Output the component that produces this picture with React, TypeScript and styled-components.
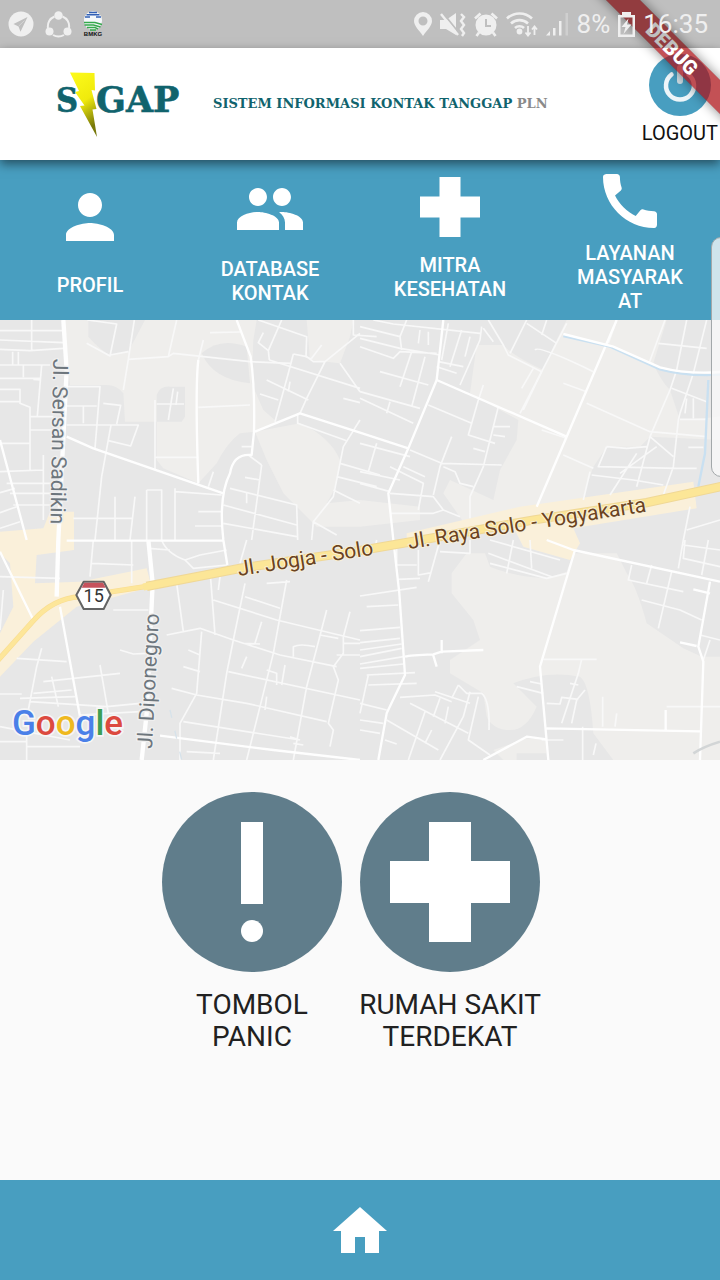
import React from "react";
import styled, { createGlobalStyle } from "styled-components";

const BLUE = "#489ec0";
const SLATE = "#607d8b";
const TEAL = "#10636d";

const GlobalStyle = createGlobalStyle`
  *, *::before, *::after { box-sizing: border-box; }
  body { margin: 0; background: #fff; font-family: Roboto, sans-serif; }
  button { font: inherit; color: inherit; background: none; border: 0; padding: 0; cursor: pointer; }
  svg { display: block; flex: none; }
`;

const Page = styled.div`
  position: relative;
  display: flex;
  flex-direction: column;
  min-height: 100vh;
  overflow: hidden;
`;

/* ---------- status bar ---------- */

const StatusBar = styled.div`
  position: relative;
  z-index: 4;
  display: flex;
  align-items: center;
  justify-content: space-between;
  height: 48px;
  padding: 0 12px 0 8px;
  background: rgba(0, 0, 0, 0.25);
  color: #efefef;
`;

const StatusGroup = styled.div<{ $gap: number }>`
  display: flex;
  align-items: center;
  gap: ${(p) => p.$gap}px;
`;

const StatusText = styled.span`
  font-size: 26px;
  line-height: 48px;
`;

/* ---------- debug ribbon ---------- */

const RibbonCorner = styled.div`
  position: absolute;
  top: 0;
  right: 0;
  z-index: 3;
  width: 140px;
  height: 140px;
  overflow: hidden;
  pointer-events: none;
`;

const Ribbon = styled.div`
  position: absolute;
  top: 37px;
  left: -18px;
  width: 220px;
  height: 24px;
  transform: rotate(45deg);
  background: rgba(172, 14, 20, 0.72);
  box-shadow: 0 0 12px rgba(0, 0, 0, 0.45);
  color: #fff;
  font-size: 20px;
  font-weight: 900;
  line-height: 24px;
  text-align: center;
`;

/* ---------- header ---------- */

const Header = styled.header`
  position: relative;
  z-index: 2;
  display: flex;
  align-items: center;
  gap: 32px;
  height: 112px;
  padding: 0 2px 0 56px;
  background: #fff;
  box-shadow: 0 4px 10px rgba(0, 0, 0, 0.5);
`;

const Title = styled.h1`
  margin: 0;
  color: ${TEAL};
  font-family: "DejaVu Serif", serif;
  font-size: 13px;
  font-weight: 700;
  line-height: 16px;
  white-space: nowrap;
`;

const TitleSuffix = styled.span`
  color: #8a8a8a;
`;

const LogoutButton = styled.button`
  display: flex;
  flex-direction: column;
  align-items: center;
  align-self: flex-start;
  gap: 5px;
  margin-left: auto;
  padding-top: 6px;
  color: #111;
  font-size: 20px;
  line-height: 24px;
`;

/* ---------- menu ---------- */

const Menu = styled.nav`
  display: grid;
  grid-template-columns: repeat(4, 1fr);
  height: 160px;
  background: ${BLUE};
  color: #fff;
`;

const MenuItem = styled.button`
  display: flex;
  flex-direction: column;
  align-items: center;
  justify-content: space-evenly;
`;

const MenuLabel = styled.span`
  width: 116px;
  padding-bottom: 2px;
  font-size: 20px;
  font-weight: 500;
  line-height: 24px;
  overflow-wrap: anywhere;
`;

/* ---------- map ---------- */

const MapArea = styled.section`
  height: 440px;
  background: #e8e8e8;
`;

const MapSvg = styled.svg`
  width: 100%;
  height: 100%;
`;

const EdgeHandle = styled.div`
  position: absolute;
  top: 237px;
  right: -12px;
  z-index: 3;
  width: 21px;
  height: 240px;
  border: 1px solid #a3a8aa;
  border-radius: 10px;
  background: rgba(250, 250, 250, 0.76);
`;

/* ---------- actions ---------- */

const Actions = styled.main`
  display: flex;
  flex: 1;
  justify-content: center;
  gap: 18px;
  padding: 32px 18px 32px 0;
  background: #fafafa;
`;

const ActionButton = styled.button`
  display: flex;
  flex-direction: column;
  align-items: center;
  align-self: flex-start;
  gap: 17px;
  width: 180px;
  color: #212121;
  font-size: 28px;
  line-height: 32px;
  white-space: nowrap;
`;

const BottomBar = styled.footer`
  display: flex;
  align-items: center;
  justify-content: center;
  height: 100px;
  background: ${BLUE};
  color: #fff;
`;

/* ---------- drawings ---------- */

const TelegramIcon = () => (
  <svg width="26" height="26" viewBox="0 0 26 26">
    <circle cx="13" cy="13" r="12.5" fill="currentColor" />
    <path d="M19.500 6 5.500 13l5 2.400 2 5.400z" fill="#bfbfbf" />
    <path d="M16.500 9.500 10.600 15.200" stroke="#d4d4d4" strokeWidth="1" />
  </svg>
);

const ShareIcon = () => (
  <svg width="27" height="27" viewBox="0 0 27 27" fill="none" stroke="currentColor" strokeWidth="2">
    <path d="M9.500 5.500A10.500 10.500 0 0 0 3 17M17.500 5.500A10.500 10.500 0 0 1 24 17M8 24a11 11 0 0 0 11 0" />
    <g fill="currentColor" stroke="none">
      <circle cx="13.500" cy="4.500" r="4.200" />
      <circle cx="4.500" cy="20.500" r="4" />
      <circle cx="22.500" cy="20.500" r="4" />
    </g>
  </svg>
);

const BmkgIcon = () => (
  <svg width="20" height="26" viewBox="0 0 20 26">
    <path d="M1 9a9 9 0 0 1 18 0v1a9 9 0 0 1-18 0z" fill="#f4f8fa" />
    <path d="M6 1.500h8M3.500 3.800h13M2 6h5M13 6h5" stroke="#3260b5" strokeWidth="1.400" />
    <path d="M1 11.500h11l7 2M1.500 14h9l7 2M4 16.500h8l3 1.500M7 19h6" stroke="#35a94c" strokeWidth="1.500" fill="none" />
    <text x="10" y="25" textAnchor="middle" fontSize="6" fontWeight="900" fontFamily="Liberation Sans, sans-serif" fill="#111">
      BMKG
    </text>
  </svg>
);

const PinIcon = () => (
  <svg width="18" height="24" viewBox="0 0 18 24">
    <path fill="currentColor" fillRule="evenodd" d="M9 0a9 9 0 0 0-9 9c0 5 5 9 9 15 4-6 9-10 9-15a9 9 0 0 0-9-9zm0 4.500a4.500 4.500 0 1 1 0 9 4.500 4.500 0 0 1 0-9z" />
  </svg>
);

const MuteIcon = () => (
  <svg width="26" height="25" viewBox="0 0 26 25">
    <path fill="currentColor" d="M0 8h6l10-7v22L6 17H0z" />
    <path d="M3 1l16 20" stroke="#bfbfbf" strokeWidth="2" />
    <path d="M1 2l17 21" stroke="currentColor" strokeWidth="2.400" />
    <path d="M21 2l3 3-3 4 3 4-3 4 3 4-2 3" fill="none" stroke="currentColor" strokeWidth="2.400" />
  </svg>
);

const AlarmIcon = () => (
  <svg width="24" height="25" viewBox="0 0 24 25">
    <circle cx="12" cy="13" r="10.500" fill="currentColor" />
    <path d="M1 6.500 6.500 1.500M23 6.500 17.500 1.500M5 20.500 2.500 24M19 20.500 21.500 24" stroke="currentColor" strokeWidth="2.600" />
    <path d="M12 7v7h5" fill="none" stroke="#bfbfbf" strokeWidth="2" />
  </svg>
);

const WifiIcon = () => (
  <svg width="32" height="26" viewBox="0 0 32 26" fill="none" stroke="currentColor" strokeWidth="2.600">
    <path d="M1 7.500a18 18 0 0 1 25 0M5 12.500a12.500 12.500 0 0 1 17 0M9 17a6.500 6.500 0 0 1 9 0" />
    <circle cx="13.500" cy="20.500" r="1.600" fill="currentColor" />
    <path d="M22 15v9M19.500 21.500 22 24.500l2.500-3M28.500 24v-8M26 18.500l2.500-3 2.500 3" strokeWidth="1.800" />
  </svg>
);

const SignalIcon = () => (
  <svg width="23" height="24" viewBox="0 0 23 24" fill="currentColor">
    <path d="M0 23.500 4 19v4.500zM7 16h2.500v7.500H7zM13 9h2.500v14.500H13z" />
    <path d="M19.500 1H22v22.500h-2.500z" opacity=".35" />
  </svg>
);

const BatteryIcon = () => (
  <svg width="17" height="25" viewBox="0 0 17 25">
    <path fill="currentColor" fillRule="evenodd" d="M4 0h9v3h4v22H0V3h4zM2.500 5.500v17h12v-17z" />
    <path fill="currentColor" d="M10.500 6.500 3.500 15h4l-2 7 8-9.500h-4.500z" />
  </svg>
);

const SigapLogo = () => (
  <svg width="125" height="72" viewBox="56 68 125 72" role="img" aria-label="SIGAP">
    <defs>
      <linearGradient id="bolt" x1="0" y1="0" x2="0.300" y2="1">
        <stop offset="0" stopColor="#fdfb1c" />
        <stop offset=".55" stopColor="#f0ea0c" />
        <stop offset="1" stopColor="#77780a" />
      </linearGradient>
    </defs>
    <g fill={TEAL} stroke={TEAL} strokeWidth="0.600" fontFamily="'DejaVu Serif', serif" fontWeight="700" fontSize="35">
      <text x="56" y="112" fontSize="34" fontFamily="'DejaVu Serif Condensed', 'DejaVu Serif', serif">
        S
      </text>
      <text x="96" y="112">GAP</text>
    </g>
    <path d="M70 72.500 94.500 73l.5 17.500-3.500-.5 5 19-4 .5L97 137 80 106l4.500-.5L75 92l4-1z" fill="url(#bolt)" />
  </svg>
);

const PowerIcon = () => (
  <svg width="62" height="62" viewBox="0 0 62 62">
    <circle cx="31" cy="31" r="31" fill={BLUE} />
    <path d="M22.500 20.500a14 14 0 1 0 17 0" fill="none" stroke="#edf5f9" strokeWidth="4.500" strokeLinecap="round" />
    <path d="M31 14v13" stroke="#cfdde4" strokeWidth="6" strokeLinecap="round" />
  </svg>
);

const Icon72 = ({ d }: { d: string }) => (
  <svg width="72" height="72" viewBox="0 0 24 24" fill="currentColor">
    <path d={d} />
  </svg>
);

const PERSON = "M12 12c2.210 0 4-1.790 4-4s-1.790-4-4-4-4 1.790-4 4 1.790 4 4 4zm0 2c-2.670 0-8 1.340-8 4v2h16v-2c0-2.660-5.330-4-8-4z";
const PEOPLE =
  "M16 11c1.660 0 2.990-1.340 2.990-3S17.660 5 16 5s-3 1.340-3 3 1.340 3 3 3zm-8 0c1.660 0 2.990-1.340 2.990-3S9.660 5 8 5 5 6.340 5 8s1.340 3 3 3zm0 2c-2.330 0-7 1.170-7 3.500V19h14v-2.500c0-2.330-4.670-3.500-7-3.500zm8 0c-.29 0-.62.020-.97.050 1.160.840 1.970 1.970 1.970 3.450V19h6v-2.500c0-2.330-4.670-3.500-7-3.500z";
const PHONE =
  "M20.010 15.380c-1.230 0-2.420-.2-3.530-.56-.35-.12-.74-.03-1.010.240l-1.570 1.970c-2.830-1.350-5.480-3.900-6.890-6.830l1.950-1.660c.27-.28.35-.67.240-1.020-.37-1.110-.56-2.300-.56-3.530 0-.54-.45-.99-.99-.99H4.190C3.650 3 3 3.240 3 3.990 3 13.280 10.730 21 20.010 21c.71 0 .99-.63.99-1.180v-3.450c0-.54-.45-.99-.99-.99z";

const CrossIcon = () => (
  <svg width="60" height="60" viewBox="0 0 60 60" fill="currentColor">
    <path d="M19.500 0h21v19.500H60v21H40.500V60h-21V40.500H0v-21h19.500z" />
  </svg>
);

const PanicIcon = () => (
  <svg width="180" height="180" viewBox="0 0 180 180">
    <circle cx="90" cy="90" r="90" fill={SLATE} />
    <path d="M79 30h22v82H79z" fill="#fff" />
    <circle cx="90" cy="139" r="11" fill="#fff" />
  </svg>
);

const HospitalIcon = () => (
  <svg width="180" height="180" viewBox="0 0 180 180">
    <circle cx="90" cy="90" r="90" fill={SLATE} />
    <path d="M69 30h42v39h39v42h-39v39H69v-39H30V69h39z" fill="#fff" />
  </svg>
);

const HomeIcon = () => (
  <svg width="54" height="46" viewBox="0 0 54 46" fill="currentColor">
    <path d="M27 0 54 24h-8v22H32V30H22v16H8V24H0z" />
  </svg>
);

/* Street map, drawn in four tiles of 1080 x 660 units. */
const StreetMap = () => (
  <MapSvg viewBox="0 0 2160 1320" preserveAspectRatio="xMidYMid slice" role="img" aria-label="Peta">
    <rect width="2160" height="1320" fill="#e7e7e7" />

    <g fill="#efeeec">
      <path d="M195 0H265L265 50Q300 90 330 105L385 95 435 0H770L760 60 755 190 790 270 830 305 765 335 720 340Q680 370 650 430L595 490 490 445 470 420V305H375L370 220Q350 195 320 195H210Z" />
      <path d="M920 0H1060L1050 50 1020 130 930 120Z" />
      <path d="M765 335 900 310Q990 350 1020 420 1020 490 980 550L1080 540 1260 560V600L1080 620H950L850 520 800 420Z" />
      <path d="M1430 75H1510Q1540 110 1630 150L1660 80 1700 0H2000L1960 130Q1980 180 2010 210L2040 300 2160 290V360L1950 350 1920 380 1820 380 1780 440 1740 560 1400 620 1330 520 1350 480 1480 540 1500 450 1550 360 1555 300 1410 220Z" />
      <path d="M1400 700 1455 700 1470 740Q1540 770 1640 775L1700 755 1720 700H1850L1880 760Q1910 800 1940 910L2050 985 2105 1010H2160V1320H1840L1780 1240Q1770 1090 1740 1070 1640 1050 1540 1090L1610 1160Q1580 1230 1530 1230 1480 1230 1460 1190L1450 1120 1350 1060V1020L1440 960 1420 900 1355 820V760Z" />
      <path d="M1480 1290 1580 1255 1640 1260V1300H1550L1550 1320H1510Z" />
    </g>
    <g fill="#e6e6e6">
      <path d="M605 100Q660 50 740 80L750 190Q640 180 605 100Z" />
      <path d="M470 225Q480 198 510 200H555V290L545 305H470Z" />
    </g>
    <g fill="#faf0da">
      <path d="M0 635 130 625 150 575H222V690L110 705 105 790 240 785 440 745 455 800 330 835 230 860 100 965 0 1070V940L40 860 30 730 0 700Z" />
      <path d="M1560 560 2080 485 2090 565 1720 625 1740 670 1710 720 1570 680 1540 620 1220 670V640Z" />
    </g>

    <g fill="none" stroke="#f8f8f8" strokeWidth="5" strokeLinejoin="round">
      {/* north-west */}
      <path d="M0 32H190M0 60 190 68M0 88 90 92 190 85M95 0V90M0 135H150M70 135V172M0 175H120M100 178 122 180M0 208H60V250L90 262V450M0 245H60M125 135 112 288M90 290H160M90 330H160M0 370H90M0 455 130 450M20 490H170M30 520H170M40 555H150M0 518 45 505M0 578 50 560M0 625 60 605M130 405V600M38 95V135M55 95V135" />
      <path d="M262 0 350 12 330 108 260 70M330 105 385 95M403 0 385 118 505 110 520 100 750 125 870 130M385 118 370 210M530 0 505 110M610 60 595 120M630 38 720 36M200 200H300L285 385M200 258H290M250 258V310M200 315H415L392 378 325 362M310 250 362 256 350 312M333 315 305 470 285 660M465 240V450M465 412H595M470 252H552M520 205 505 300M533 215 528 255M595 262 750 255" />
      <path d="M775 0 920 50 918 110 935 118M845 0 805 92 808 120M790 38 775 68 805 92M808 120 1080 205M880 102 920 110 940 125 975 125 1080 40M975 125 920 235 900 280M880 102 865 160 825 305M800 180 925 240M780 222 835 240M870 185 865 215M1020 130 1080 215M965 75 935 115M1060 0V45L1130 50M893 280V310L1040 362M1030 235 1080 248" />
      <path d="M640 455 625 500M785 435 755 660M745 405 785 435M725 380H755M735 472 780 480M740 520V550M690 505 890 555 893 660M670 555 890 615M670 610 890 650M595 575H665M585 618H665M525 505V660M525 515 665 525M440 510H485V660M440 510V660M405 530 390 660M345 530V660M220 595H395M1080 300 1030 380 1000 530 940 605 935 660M1020 430 1140 465M1010 470 1130 500M1000 510 1080 550M940 605 1010 645" />
      {/* north-east */}
      <g transform="translate(1080 0)">
        <path d="M0 20 120 50 125 90M0 55 120 85 240 105M0 80 100 115 120 95 230 100M40 0 100 12 360 40M140 0 120 50M180 30 175 70M205 35V75M265 10 245 120M305 30 270 140M330 50 315 110M365 20 360 60 300 195M370 25 400 65M385 0 430 75 445 105 545 155 490 270M60 155 205 195M155 95 120 200M195 110 155 260M235 125 310 140M230 140 290 160M0 215 180 265M0 235 160 310M90 245 80 280M205 255 335 310M370 195 355 240 325 345 405 370M415 260 370 440 330 530V595M400 320H450M400 345 435 350M340 385 375 395M150 390 245 430 425 435M275 350 240 440 220 525M250 440 285 455 300 490 340 500M90 440 190 490 175 570M130 440 195 470M0 370 150 410M0 455 120 480M50 370 25 455M0 490 90 515M90 520 220 530 250 570 300 590M90 580 220 580M220 580 250 570" />
        <path d="M500 0 450 100M500 10 590 70M560 0 545 45M620 10 545 155 480 280M525 90Q535 75 700 155M610 190 680 215M520 145 485 205M770 0 745 70M915 0 865 135M895 70 1040 85M980 0 950 150 930 210 870 350 830 500M1040 0 1000 160 960 280 955 300 940 440 910 525M935 205 1040 245M1000 235V295M980 235 975 280M960 298H1040M680 250 870 335 1040 350M870 350 940 410M740 380 800 385 860 380M740 380 715 440 950 445M695 465 820 480 910 495M830 400 750 525M890 380 780 460M690 455 670 540M545 330 620 355M610 405 700 445M940 445H1010M985 382H1030M970 660 990 560M1080 600 980 630" />
      </g>
      {/* south-west */}
      <g transform="translate(0 660)">
        <path d="M0 110 180 115M10 150 0 270M280 0 270 110M275 70 400 75M395 0V130M340 210H445M445 25 510 30M485 0Q500 40 555 60L600 45 680 30M555 60 580 85 680 75M530 130 550 275M630 90 645 285M660 110 655 150M740 0 720 70M500 285 600 265 700 300 840 345 1010 380M640 180 830 240 1080 300M735 130 700 300 680 400 640 660M735 170 840 205M860 120 820 340 740 660M800 130 870 125M785 245 765 310M730 310 780 312M880 350V320Q900 310 945 320M980 210 920 440 880 660M605 275 590 460 540 550V660M565 330 600 345M550 380 600 395M515 445 590 465 740 490 980 545M685 395 1080 480M740 350 725 385M800 390 830 400V435M855 375 845 435M800 470 795 510M1050 215 1030 290V340L1000 380 1015 420 985 550 1000 570 990 620M1030 310H1080M1010 345H1080M960 285 1015 295M550 545 900 600M560 635 660 640M870 590 900 600M880 610 910 615" />
        <path d="M125 325 110 380 85 510M50 355 200 365M130 425 360 400M100 460 215 450M155 410 175 500M300 375 325 520M60 475 225 470M0 462H65M90 485 320 500 420 490M240 525 420 515M0 560 210 600M80 580V660M0 605H80M80 620H240M360 330 400 342 440 340" />
      </g>
      {/* south-east */}
      <g transform="translate(1080 660)">
        <path d="M50 0 45 25M110 0V75H170M175 30V105L215 98M115 118 180 115M240 0 205 125M330 0V40L240 35M0 168 170 142M20 200 115 195M0 272 120 262M0 308 120 295M0 330 125 312M0 350 125 325M0 372 130 350M0 385 130 372M20 405 165 398M25 435 170 430M25 405 0 520M0 490 80 510M0 540 70 550M0 570 60 580M120 472 225 465 275 485M225 455 330 490M295 435 275 475M295 435 320 460 365 460Q390 480 387 570M330 455 310 530 240 660M355 470 325 600 390 645M150 490 325 580M195 515 145 660M240 475 220 530M80 540 235 630M75 600 110 612M215 570 195 610M265 500 255 550" />
        <path d="M390 0 600 60M385 40 575 110M460 0 440 100M510 0 515 85M390 70 560 115 620 100M550 358H710M665 358 655 400 605 550M470 440 550 460M510 425 545 432M560 490 600 492 605 472 655 478M675 450 650 480 635 550M630 430 655 435M728 470V560M770 520 765 560M668 560V660M708 610 700 645M920 500H1080M875 75 860 130M815 75 805 120 970 155M935 95 895 265M845 180 960 210 1025 240M970 0 955 85M975 0 970 55 1080 80M1045 0 1025 105M970 15 1080 30M1020 285 1080 300M1050 300 1030 360M545 600H610" />
      </g>
    </g>

    <g fill="none" stroke="#fefefe" strokeWidth="7" strokeLinejoin="round">
      <path d="M200 350 280 385 670 520M595 120Q585 200 595 490M710 0 752 110Q765 200 762 335L755 405Q700 400 690 460 655 530 670 660L682 735M765 335 900 280 1080 338 1225 385M1330 0 1310 180 1225 385 1165 520 1180 660 1198 820 1215 1065 1160 1180 1135 1320M1310 180 1700 350M1850 0 1700 350 1610 560" />
      <path d="M1725 690 1620 1040 1645 1320M1640 660 1720 690 2160 785M2130 785 2095 980 2110 1025 2100 1320M1640 1225 2100 1234M1215 1010Q1230 1005 1300 1003L1325 995 1450 990M1325 960V1000M1298 1000 1310 1040M2040 967 2090 978M2080 808 2130 820M1997 1170V1230M1450 1320 1580 1250 1640 1258M480 1247 820 1290 1080 1320M0 360 80 660M0 695 100 900M180 860 240 1190M200 662 670 662" />
    </g>
    <g fill="none" stroke="#fefefe" strokeWidth="13">
      <path d="M190 0 200 150 175 660 170 830M445 660 458 790 440 1180 425 1320" />
    </g>

    <path d="M1690 48 1830 80 1980 148Q2060 170 2160 164M2125 180 2115 400 2095 500" fill="none" stroke="#c9e0f1" strokeWidth="7" />
    <path d="M1690 42 1840 80 1980 142Q2060 163 2160 156" fill="none" stroke="#fff" strokeWidth="7" />
    <path d="M510 1170 545 1320" fill="none" stroke="#d6e2ea" strokeWidth="4" strokeDasharray="24 40" />
    <path d="M2080 1300Q2110 1280 2160 1265" fill="none" stroke="#d2d5d6" strokeWidth="8" />

    <g fill="none">
      <path d="M-10 1025 100 902Q160 835 240 830L440 799" stroke="#f9dd92" strokeWidth="16" />
      <path d="M440 799 720 745 1080 692 1240 664 1600 600 1940 548 2170 498" stroke="#f0d896" strokeWidth="28" />
      <path d="M-10 1025 100 902Q160 835 240 830L440 799" stroke="#fde699" strokeWidth="12" />
      <path d="M430 801 720 745 1080 692 1240 664 1600 600 1940 548 2170 498" stroke="#fce697" strokeWidth="22" />
    </g>

    <g fontFamily="Roboto, sans-serif" fontSize="63" paintOrder="stroke" strokeLinejoin="round">
      <g fill="#6d767d" stroke="#efefef" strokeWidth="8">
        <text transform="translate(160 116) rotate(91)">Jl. Sersan Sadikin</text>
        <text transform="translate(456 1287) rotate(-87)">Jl. Diponegoro</text>
      </g>
      <g fill="#6b4320" stroke="#f8f0d8" strokeWidth="6">
        <text transform="translate(716 768) rotate(-9)">Jl. Jogja - Solo</text>
        <text transform="translate(1227 687) rotate(-9)">Jl. Raya Solo - Yogyakarta</text>
      </g>
    </g>

    <path d="M229 825 251 785H311L332 825 311 867H251Z" fill="#fff" stroke="#636363" strokeWidth="6" strokeLinejoin="round" />
    <path d="M253 788H309L317 803H245Z" fill="#c6535c" />
    <text x="281" y="846" textAnchor="middle" fontFamily="Roboto, sans-serif" fontSize="54" fill="#333">
      15
    </text>

    <text x="36" y="1246" fontFamily="Roboto, sans-serif" fontSize="105" fontWeight="500" stroke="#f6f6f6" strokeWidth="10" paintOrder="stroke">
      <tspan fill="#4a80e8">G</tspan>
      <tspan fill="#dc4a3f">o</tspan>
      <tspan fill="#efb91f">o</tspan>
      <tspan fill="#4a80e8">g</tspan>
      <tspan fill="#3c9f54">l</tspan>
      <tspan fill="#dc4a3f">e</tspan>
    </text>
  </MapSvg>
);

const menuItems = [
  { label: "PROFIL", icon: <Icon72 d={PERSON} /> },
  { label: "DATABASE KONTAK", icon: <Icon72 d={PEOPLE} /> },
  { label: "MITRA KESEHATAN", icon: <CrossIcon /> },
  { label: "LAYANAN MASYARAKAT", icon: <Icon72 d={PHONE} /> },
];

export default function App() {
  return (
    <Page>
      <GlobalStyle />
      <StatusBar>
        <StatusGroup $gap={11}>
          <TelegramIcon />
          <ShareIcon />
          <BmkgIcon />
        </StatusGroup>
        <StatusGroup $gap={8}>
          <PinIcon />
          <MuteIcon />
          <AlarmIcon />
          <WifiIcon />
          <SignalIcon />
          <StatusText>8%</StatusText>
          <BatteryIcon />
          <StatusText>16:35</StatusText>
        </StatusGroup>
      </StatusBar>
      <RibbonCorner>
        <Ribbon>DEBUG</Ribbon>
      </RibbonCorner>

      <Header>
        <SigapLogo />
        <Title>
          SISTEM INFORMASI KONTAK TANGGAP <TitleSuffix>PLN</TitleSuffix>
        </Title>
        <LogoutButton>
          <PowerIcon />
          LOGOUT
        </LogoutButton>
      </Header>

      <Menu>
        {menuItems.map((item) => (
          <MenuItem key={item.label}>
            {item.icon}
            <MenuLabel>{item.label}</MenuLabel>
          </MenuItem>
        ))}
      </Menu>

      <MapArea>
        <StreetMap />
      </MapArea>
      <EdgeHandle />

      <Actions>
        <ActionButton>
          <PanicIcon />
          <span>
            TOMBOL
            <br />
            PANIC
          </span>
        </ActionButton>
        <ActionButton>
          <HospitalIcon />
          <span>
            RUMAH SAKIT
            <br />
            TERDEKAT
          </span>
        </ActionButton>
      </Actions>

      <BottomBar>
        <button aria-label="Beranda">
          <HomeIcon />
        </button>
      </BottomBar>
    </Page>
  );
}
